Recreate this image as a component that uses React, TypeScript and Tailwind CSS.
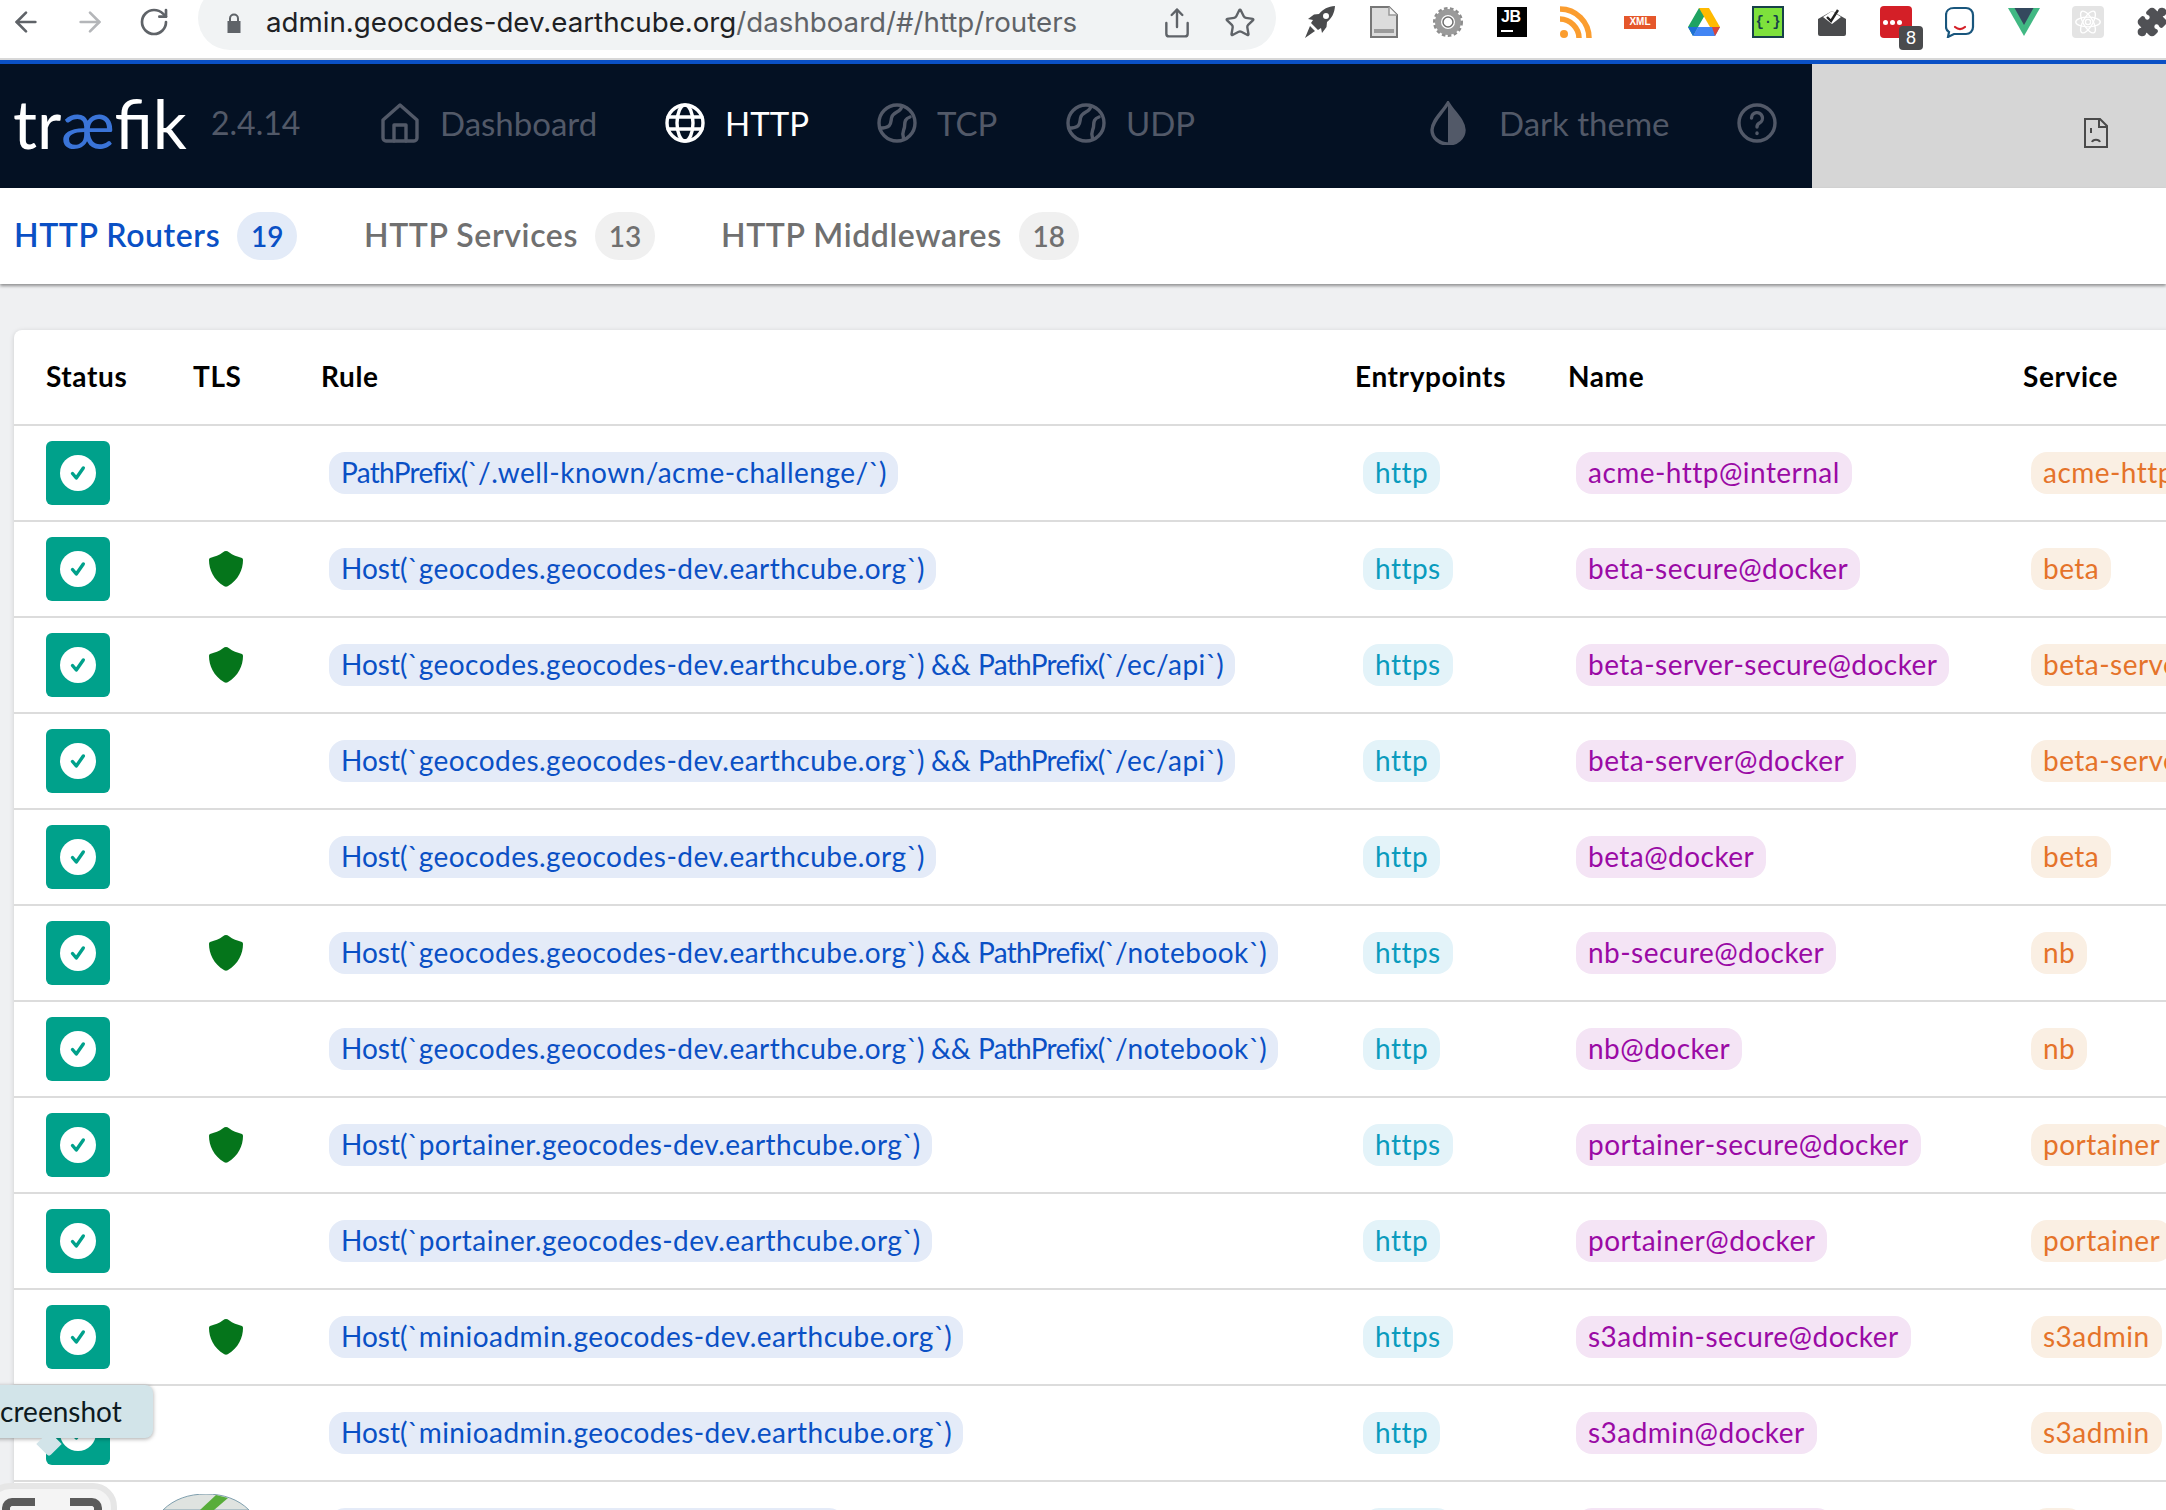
import React from "react";
import { ArrowLeft, ArrowRight, RotateCw, Share, Star, Puzzle } from "lucide-react";

const FONT = "font-['Lato','Noto_Sans',sans-serif]";

const GEO = "geocodes.geocodes-dev.earthcube.org";
const rows: [string, boolean, string, string, string][] = [
  ["PathPrefix(`/.well-known/acme-challenge/`)", false, "http", "acme-http@internal", "acme-http@internal"],
  [`Host(\`${GEO}\`)`, true, "https", "beta-secure@docker", "beta"],
  [`Host(\`${GEO}\`) && PathPrefix(\`/ec/api\`)`, true, "https", "beta-server-secure@docker", "beta-server"],
  [`Host(\`${GEO}\`) && PathPrefix(\`/ec/api\`)`, false, "http", "beta-server@docker", "beta-server"],
  [`Host(\`${GEO}\`)`, false, "http", "beta@docker", "beta"],
  [`Host(\`${GEO}\`) && PathPrefix(\`/notebook\`)`, true, "https", "nb-secure@docker", "nb"],
  [`Host(\`${GEO}\`) && PathPrefix(\`/notebook\`)`, false, "http", "nb@docker", "nb"],
  ["Host(`portainer.geocodes-dev.earthcube.org`)", true, "https", "portainer-secure@docker", "portainer"],
  ["Host(`portainer.geocodes-dev.earthcube.org`)", false, "http", "portainer@docker", "portainer"],
  ["Host(`minioadmin.geocodes-dev.earthcube.org`)", true, "https", "s3admin-secure@docker", "s3admin"],
  ["Host(`minioadmin.geocodes-dev.earthcube.org`)", false, "http", "s3admin@docker", "s3admin"],
  ["Host(`s3.geocodes-dev.earthcube.org`)", true, "https", "s3-secure@docker", "s3"],
];

const Cols = "grid grid-cols-[163px_128px_1034px_213px_455px_600px] items-center";

function Chip({ tone, children }: { tone: string; children: React.ReactNode }) {
  return (
    <span className={`ml-2 inline-flex h-[42px] items-center whitespace-nowrap rounded-[16px] px-3 pb-[2px] text-[28px] leading-none tracking-[0.47px] ${tone}`}>
      {children}
    </span>
  );
}

function RuleText({ rule }: { rule: string }) {
  const parts = rule.split(/(PathPrefix\(`|Host\(`|`\)| && )/).filter(Boolean);
  return (
    <span>
      {parts.map((p, i) => {
        if (p === "PathPrefix(`" || p === "`)") return <span key={i} className="tracking-[-0.7px]">{p}</span>;
        if (p === "Host(`" || p === " && ") return <span key={i} className="whitespace-pre tracking-normal">{p}</span>;
        return <span key={i}>{p}</span>;
      })}
    </span>
  );
}

function StatusBadge() {
  return (
    <div className="ml-8 flex h-16 w-16 items-center justify-center rounded-md bg-[#00a18b]">
      <div className="flex h-9 w-9 items-center justify-center rounded-full bg-white">
        <svg viewBox="0 0 24 24" className="h-6 w-6" fill="none" stroke="#00a18b" strokeWidth="3.4" strokeLinecap="round" strokeLinejoin="round">
          <path d="M6.5 12.5l3.8 4.5 7-10" />
        </svg>
      </div>
    </div>
  );
}

function Shield() {
  return (
    <svg viewBox="0 0 34 36" className="ml-4 h-9 w-[34px] translate-x-[16px]" fill="#05751b">
      <path d="M17 0c1 0 2 .4 3 1.300 3.500 3 8.500 4.300 12.200 5.500 1.200.4 1.800 1 1.800 2.200 0 9.500-4.500 20-15.300 26.200-1 .6-2.400.6-3.400 0C4.500 29 0 18.500 0 9c0-1.200.6-1.800 1.800-2.200C5.500 5.600 10.500 4.300 14 1.300 15 .4 16 0 17 0z" />
    </svg>
  );
}

const NavIcon = ({ children }: { children: React.ReactNode }) => (
  <svg viewBox="0 0 40 40" className="h-10 w-10 shrink-0" fill="none" stroke="currentColor" strokeWidth="3.4" strokeLinecap="round" strokeLinejoin="round">
    {children}
  </svg>
);

const Wave = () => (
  <NavIcon>
    <circle cx="20" cy="20" r="18" />
    <path d="M25 3c-1 7-9 5-10.500 12-1 5 .5 10-12 10" />
    <path d="M33 14c-6 2-5 6-5.500 10-.5 3.500-3 5-1 11" />
  </NavIcon>
);

function NavItem({ icon, label, w, active }: { icon: React.ReactNode; label: string; w: string; active?: boolean }) {
  return (
    <div className={`flex shrink-0 items-center gap-[20px] ${w} ${active ? "text-white" : "text-[#525968]"}`}>
      {icon}
      <span className="whitespace-nowrap text-[33px] leading-none">{label}</span>
    </div>
  );
}

function Tab({ label, count, w, active }: { label: string; count: number; w: string; active?: boolean }) {
  return (
    <div className={`flex shrink-0 items-center gap-[17px] ${w}`}>
      <span className={`whitespace-nowrap pb-[2px] text-[32px] font-semibold leading-none tracking-[0.6px] ${active ? "text-[#0a50c5]" : "text-[#707070]"}`}>{label}</span>
      <span className={`flex h-12 w-[60px] items-center justify-center rounded-full text-[28px] font-semibold ${active ? "bg-[#e3ebf8] text-[#0a50c5]" : "bg-[#f0f0f0] text-[#707070]"}`}>{count}</span>
    </div>
  );
}

function Ext({ children }: { children: React.ReactNode }) {
  return <div className="relative flex h-[32px] w-16 shrink-0 items-center justify-center">{children}</div>;
}

function Extensions() {
  return (
    <div className="ml-3 flex items-center">
      <Ext>
        <svg viewBox="0 0 32 32" className="h-8 w-8" fill="#4a4b4d">
          <path d="M31 0c-7 .5-12 3-16 8l-5 .5L4 13l5 1-2 3 7 7 3-2 1 5 4.500-6 .5-5c5-4 7.500-9 8-16zM22 7a3 3 0 110 6 3 3 0 010-6zM6 20l5 5-10 7z" />
        </svg>
      </Ext>
      <Ext>
        <svg viewBox="0 0 28 32" className="h-8 w-7">
          <path d="M1 1h18l8 8v22H1z" fill="#dcdcdc" stroke="#777" strokeWidth="2" />
          <path d="M19 1v8h8" fill="#f4f4f4" stroke="#999" strokeWidth="1.500" />
          <rect x="4" y="23" width="20" height="4" fill="#9b9b9b" />
        </svg>
      </Ext>
      <Ext>
        <svg viewBox="0 0 32 32" className="h-8 w-8">
          <circle cx="16" cy="16" r="13" fill="none" stroke="#8d8d8d" strokeWidth="4" strokeDasharray="3.400 2.300" />
          <circle cx="16" cy="16" r="10" fill="none" stroke="#9a9a9a" strokeWidth="6" />
          <circle cx="16" cy="16" r="5" fill="#fff" stroke="#6e6e6e" strokeWidth="1.500" />
        </svg>
      </Ext>
      <Ext>
        <div className="flex h-[30px] w-[30px] flex-col bg-black px-1 pt-[2px]">
          <span className="font-['Liberation_Sans',sans-serif] text-[16px] font-bold leading-none tracking-tight text-white">JB</span>
          <span className="mt-[5px] h-[2px] w-3 bg-white" />
        </div>
      </Ext>
      <Ext>
        <svg viewBox="0 0 32 32" className="h-8 w-8" fill="none" stroke="#fb9d2f" strokeWidth="5.500">
          <circle cx="4" cy="28" r="4" fill="#fb9d2f" stroke="none" />
          <path d="M0 13c10 0 19 9 19 19" />
          <path d="M0 3c16 0 29 13 29 29" />
        </svg>
      </Ext>
      <Ext>
        <div className="flex h-[13px] w-8 items-center justify-center bg-[#e5572b] font-['Liberation_Sans',sans-serif] text-[10px] font-bold leading-none text-white">XML</div>
      </Ext>
      <Ext>
        <svg viewBox="0 0 32 28" className="h-7 w-8">
          <path d="M11 0h10L10 19 5 28 0 19z" fill="#1ea362" />
          <path d="M11 0h10l11 19H22z" fill="#ffba00" />
          <path d="M5 28l5-9h22l-5 9z" fill="#4285f4" />
          <path d="M5 28l5-9H0z" fill="#1f6fd6" />
          <path d="M27 28l5-9h-8z" fill="#db4437" />
        </svg>
      </Ext>
      <Ext>
        <div className="flex h-8 w-8 items-center justify-center border-2 border-[#17404a] bg-[#7ee13c] font-['Liberation_Mono',monospace] text-[14px] font-bold leading-none text-[#17404a]">{"{·}"}</div>
      </Ext>
      <Ext>
        <svg viewBox="0 0 28 28" className="h-7 w-7">
          <path d="M0 11L14 3l14 8v15a2 2 0 01-2 2H2a2 2 0 01-2-2z" fill="#4a4b4d" />
          <path d="M5 9l9-6 9 6-9 7z" fill="#fff" />
          <path d="M9 9l4 4 7-11" fill="none" stroke="#222" strokeWidth="2.400" />
        </svg>
      </Ext>
      <Ext>
        <div className="flex h-8 w-8 items-center gap-[2px] rounded bg-[#d41f27] pl-[3px]">
          <span className="h-[5px] w-[5px] rounded-full bg-white" />
          <span className="h-[5px] w-[5px] rounded-full bg-white" />
          <span className="h-[5px] w-[5px] rounded-full bg-white" />
        </div>
        <div className="absolute left-[35px] top-5 flex h-6 w-6 items-center justify-center rounded bg-[#4a4b4d] font-['Liberation_Sans',sans-serif] text-[18px] leading-none text-white">8</div>
      </Ext>
      <Ext>
        <svg viewBox="0 0 30 32" className="h-8 w-[30px]" fill="none">
          <path d="M9 2h12c4 0 7 3 7 7v12c0 4-3 7-7 7H9l-6 3 1-5c-2-1-3-3-3-5V9c0-4 3-7 8-7z" stroke="#19567d" strokeWidth="2.200" />
          <path d="M10 21c3 2.500 7 2.500 10 0" stroke="#d41f27" strokeWidth="2.200" strokeLinecap="round" />
        </svg>
      </Ext>
      <Ext>
        <svg viewBox="0 0 32 28" className="h-7 w-8">
          <path d="M0 0h32L16 28z" fill="#41b883" />
          <path d="M6.500 0h19L16 17z" fill="#34495e" />
        </svg>
      </Ext>
      <Ext>
        <div className="flex h-8 w-8 items-center justify-center rounded-sm bg-[#e4e4e4]">
          <svg viewBox="0 0 32 32" className="h-7 w-7" fill="none" stroke="#fff" strokeWidth="1.500">
            <ellipse cx="16" cy="16" rx="14" ry="5.500" />
            <ellipse cx="16" cy="16" rx="14" ry="5.500" transform="rotate(60 16 16)" />
            <ellipse cx="16" cy="16" rx="14" ry="5.500" transform="rotate(120 16 16)" />
            <circle cx="16" cy="16" r="3" />
          </svg>
        </div>
      </Ext>
      <Ext>
        <Puzzle className="h-8 w-8 text-[#505155]" fill="#505155" strokeWidth={1.500} />
      </Ext>
    </div>
  );
}

export default function App() {
  return (
    <div className={`relative h-[1510px] w-[2166px] overflow-hidden bg-[#eff0f2] ${FONT}`}>
      {/* Browser toolbar */}
      <div className="flex h-[60px] items-start border-b-2 border-[#d8d8d8] bg-white">
        <div className="flex h-[44px] items-center gap-3">
          <div className="flex w-[52px] justify-center"><ArrowLeft className="h-8 w-8 text-[#5f6368]" strokeWidth={2} /></div>
          <div className="flex w-[52px] justify-center"><ArrowRight className="h-8 w-8 text-[#b4b6b9]" strokeWidth={2} /></div>
          <div className="flex w-[52px] justify-center"><RotateCw className="h-8 w-8 text-[#5f6368]" strokeWidth={2} /></div>
        </div>
        <div className="ml-[18px] -mt-[14px] flex h-[64px] w-[1078px] shrink-0 items-center rounded-full bg-[#f1f3f4] pl-[28px] pt-[9px] font-['Inter','Roboto',sans-serif]">
          <svg viewBox="0 0 16 20" className="h-[22px] w-4 shrink-0" fill="#5f6368">
            <path d="M3 8V5.500a5 5 0 0110 0V8h1.500v12h-13V8zm2 0h6V5.500a3 3 0 00-6 0z" />
          </svg>
          <span className="ml-[24px] whitespace-nowrap text-[27.7px] leading-none text-[#202124]">
            admin.geocodes-dev.earthcube.org<span className="text-[#5f6368]">/dashboard/#/http/routers</span>
          </span>
          <div className="ml-auto mr-[20px] flex items-center gap-[31px]">
            <Share className="h-8 w-8 text-[#5f6368]" strokeWidth={1.800} />
            <Star className="h-8 w-8 text-[#5f6368]" strokeWidth={1.800} />
          </div>
        </div>
        <div className="pt-[6px]"><Extensions /></div>
      </div>

      {/* Traefik navbar */}
      <div className="flex h-[128px] border-t-4 border-[#0a50c5]">
        <div className="flex w-[1812px] shrink-0 items-center bg-[#041123] pb-[6px]">
          <div className="w-[211px] shrink-0 pl-[13px] font-['Lato',sans-serif] text-[67px] font-normal leading-none text-white">
            tr<span className="text-[#3a74d8]">æ</span>fik
          </div>
          <div className="w-[169px] shrink-0 text-[32px] leading-none text-[#525968]">2.4.14</div>
          <NavItem
            w="w-[285px]"
            label="Dashboard"
            icon={
              <NavIcon>
                <path d="M3 17L20 2l17 15v18a3 3 0 01-3 3H6a3 3 0 01-3-3z" />
                <path d="M14 38V22h12v16" />
              </NavIcon>
            }
          />
          <NavItem
            w="w-[212px]"
            label="HTTP"
            active
            icon={
              <NavIcon>
                <circle cx="20" cy="20" r="18" />
                <ellipse cx="20" cy="20" rx="8" ry="18" />
                <path d="M3 14h34M3 26h34" />
              </NavIcon>
            }
          />
          <NavItem w="w-[189px]" label="TCP" icon={<Wave />} />
          <NavItem w="w-[364px]" label="UDP" icon={<Wave />} />
          <div className="flex w-[307px] shrink-0 items-center gap-[33px] text-[#525968]">
            <svg viewBox="0 0 36 44" className="h-11 w-9 shrink-0">
              <path d="M18 2C12 12 2 20 2 29a16 14 0 0032 0C34 20 24 12 18 2z" fill="none" stroke="currentColor" strokeWidth="3.400" />
              <path d="M18 2C24 12 34 20 34 29a16 14 0 01-16 14z" fill="currentColor" />
            </svg>
            <span className="whitespace-nowrap text-[33px] leading-none">Dark theme</span>
          </div>
          <div className="text-[#525968]">
            <NavIcon>
              <circle cx="20" cy="20" r="18" />
              <path d="M14.500 15a5.500 5.500 0 1 1 8 5c-1.800 1-2.500 2-2.500 4" />
              <path d="M20 30v.5" />
            </NavIcon>
          </div>
        </div>
        <div className="flex flex-1 items-center justify-end bg-[#d6d6d6] pr-[58px] pt-[14px]">
          <svg viewBox="0 0 24 30" className="h-[30px] w-6" fill="none" stroke="#4a4a4a" strokeWidth="2">
            <path d="M1 1h15l7 7v21H1z" />
            <path d="M15 1v8h8" />
            <path d="M7 10v5M8 24c1-3 7-3 8 0" />
          </svg>
        </div>
      </div>

      {/* Tabs */}
      <div className="relative flex h-[96px] items-center bg-white pl-[14px] shadow-[0_2px_3px_rgba(0,0,0,0.4)]">
        <Tab w="w-[350px]" label="HTTP Routers" count={19} active />
        <Tab w="w-[357px]" label="HTTP Services" count={13} />
        <Tab w="w-[400px]" label="HTTP Middlewares" count={18} />
      </div>

      {/* Table card */}
      <div className="ml-[14px] mt-[46px] w-[2594px] rounded-tl-lg bg-white shadow-[0_1px_5px_rgba(0,0,0,0.15)]">
        <div className={`${Cols} h-24 border-b-2 border-[#dcdcdc] pb-[2px] text-[28px] font-bold leading-none tracking-[0.6px] text-black`}>
          <div className="pl-8">Status</div>
          <div className="pl-4">TLS</div>
          <div className="pl-4">Rule</div>
          <div className="pl-4">Entrypoints</div>
          <div className="pl-4">Name</div>
          <div className="pl-4">Service</div>
        </div>
        {rows.map(([rule, tls, ep, name, svc], i) => (
          <div key={i} className={`${Cols} h-24 border-b-2 border-[#dcdcdc]`}>
            <StatusBadge />
            <div>{tls && <Shield />}</div>
            <div className="pl-4"><Chip tone="bg-[#e4ebf8] text-[#0a50c5]"><RuleText rule={rule} /></Chip></div>
            <div className="pl-4"><Chip tone="bg-[#e3f3f9] text-[#0a9bbd]">{ep}</Chip></div>
            <div className="pl-4"><Chip tone="bg-[#f4e4f5] text-[#9a0aa5]">{name}</Chip></div>
            <div className="pl-4"><Chip tone="bg-[#faefe3] text-[#e5732a]">{svc}</Chip></div>
          </div>
        ))}
      </div>

      {/* Tooltip over the table */}
      <div className="absolute left-[-22px] top-[1385px] flex h-[53px] w-[175px] items-center rounded-lg bg-[#d2e4e9] pb-[2px] pl-[7px] text-[28px] leading-none text-[#0d1a1f] shadow-[0_1px_4px_rgba(0,0,0,0.35)]">
        Screenshot
        <div className="absolute left-[62px] top-[50px] h-[18px] w-[18px] rotate-45 rounded-br-[3px] bg-[#d2e4e9]" />
      </div>

      {/* Screenshot toolbar thumbnail */}
      <div className="absolute left-[-14px] top-[1483px] h-[60px] w-[131px] rounded-[24px] border-[6px] border-[#e6e6e6] bg-[#f4f4f4]">
        <div className="absolute left-[10px] top-[9px] h-6 w-[33px] rounded-tl-[10px] border-l-[8px] border-t-[8px] border-[#5b5b5b]" />
        <div className="absolute left-[78px] top-[9px] h-6 w-[32px] rounded-tr-[10px] border-r-[8px] border-t-[8px] border-[#5b5b5b]" />
      </div>

      {/* Clipped round app icon */}
      <div className="absolute left-[160px] top-[1494px]">
        <svg viewBox="0 0 92 16" className="h-4 w-[92px]">
          <path d="M3 16C14 5 29 0 46 0s32 5 43 16z" fill="#dfe3e0" stroke="#7f9fae" strokeWidth="1" />
          <path d="M40 16L56 1l12 3-14 12z" fill="#58ad3a" />
        </svg>
      </div>
    </div>
  );
}
